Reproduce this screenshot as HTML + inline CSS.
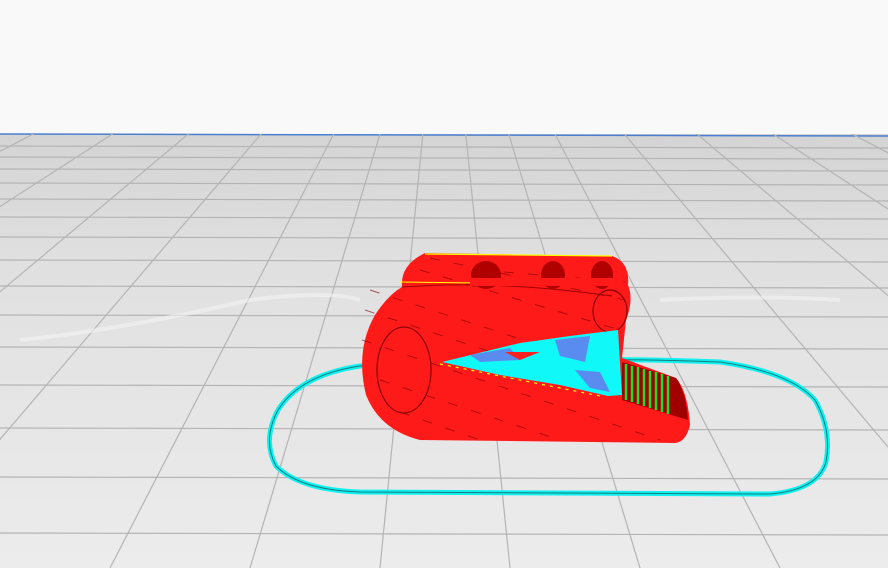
<!DOCTYPE html>
<html><head><meta charset="utf-8"><style>
html,body{margin:0;padding:0;background:#f9f9f9}
svg{display:block}
</style></head><body>
<svg width="888" height="568" viewBox="0 0 888 568" xmlns="http://www.w3.org/2000/svg">
<defs>
<linearGradient id="fl" x1="0" y1="0" x2="0" y2="1">
<stop offset="0" stop-color="#d4d4d4"/><stop offset="0.3" stop-color="#e0e0e0"/><stop offset="1" stop-color="#ececec"/>
</linearGradient>
<clipPath id="fc"><rect x="0" y="134" width="888" height="434"/></clipPath>
</defs>
<rect width="888" height="134" fill="#f9f9f9"/>
<rect x="0" y="134" width="888" height="434" fill="url(#fl)"/>
<line x1="0" y1="134" x2="888" y2="136" stroke="#4a7fd0" stroke-width="1.5"/>
<g clip-path="url(#fc)" stroke="#b4b4b4" stroke-width="1.2">
<line x1="0" y1="146" x2="888" y2="148"/>
<line x1="0" y1="157" x2="888" y2="159"/>
<line x1="0" y1="169" x2="888" y2="171"/>
<line x1="0" y1="183" x2="888" y2="185"/>
<line x1="0" y1="199" x2="888" y2="201"/>
<line x1="0" y1="217" x2="888" y2="219"/>
<line x1="0" y1="237" x2="888" y2="239"/>
<line x1="0" y1="260" x2="888" y2="262"/>
<line x1="0" y1="286" x2="888" y2="288"/>
<line x1="0" y1="315" x2="888" y2="317"/>
<line x1="0" y1="347" x2="888" y2="349"/>
<line x1="0" y1="385" x2="888" y2="387"/>
<line x1="0" y1="428" x2="888" y2="430"/>
<line x1="0" y1="477" x2="888" y2="479"/>
<line x1="0" y1="533" x2="888" y2="535"/>
<g>
<line x1="444" y1="-80" x2="-800" y2="568"/>
<line x1="444" y1="-80" x2="-560" y2="568"/>
<line x1="444" y1="-80" x2="-330" y2="568"/>
<line x1="444" y1="-80" x2="-110" y2="568"/>
<line x1="444" y1="-80" x2="110" y2="568"/>
<line x1="444" y1="-80" x2="250" y2="568"/>
<line x1="444" y1="-80" x2="380" y2="568"/>
<line x1="444" y1="-80" x2="510" y2="568"/>
<line x1="444" y1="-80" x2="640" y2="568"/>
<line x1="444" y1="-80" x2="780" y2="568"/>
<line x1="444" y1="-80" x2="990" y2="568"/>
<line x1="444" y1="-80" x2="1210" y2="568"/>
<line x1="444" y1="-80" x2="1440" y2="568"/>
<line x1="444" y1="-80" x2="1680" y2="568"/>
</g>
</g>
<g fill="none" stroke="#f4f4f4" stroke-width="4" opacity="0.6">
<path d="M20 340 Q120 330 250 300 Q330 290 360 300"/>
<path d="M660 300 Q760 295 840 300"/>
</g>
<!-- skirt -->
<path d="M360 366 Q520 355 720 362 Q790 372 815 400 Q832 430 826 462 Q818 490 770 494 L360 492 Q300 490 276 466 Q262 440 278 410 Q300 375 360 366 Z" fill="none" stroke="#10f0f0" stroke-width="5"/>
<path d="M360 366 Q520 355 720 362 Q790 372 815 400 Q832 430 826 462 Q818 490 770 494 L360 492 Q300 490 276 466 Q262 440 278 410 Q300 375 360 366 Z" fill="none" stroke="#1b7a7a" stroke-width="1"/>
<!-- object body -->
<path d="M425 253 L612 256 Q630 262 628 285 Q634 300 626 320 L622 358 L676 378 Q688 392 690 425 Q686 442 675 443 L420 440 Q380 430 366 395 Q355 350 375 315 Q388 295 402 287 Q400 265 425 253 Z" fill="#ff1a1a"/>
<g stroke="#7a0000" stroke-width="1" opacity="0.6" stroke-dasharray="10 14">
<line x1="365" y1="310" x2="620" y2="395"/>
<line x1="362" y1="340" x2="660" y2="440"/>
<line x1="370" y1="290" x2="600" y2="365"/>
<line x1="380" y1="380" x2="560" y2="440"/>
<line x1="420" y1="270" x2="620" y2="330"/>
<line x1="430" y1="258" x2="625" y2="300"/>
<line x1="400" y1="412" x2="480" y2="440"/>
<line x1="480" y1="270" x2="625" y2="282"/>
</g>
<path d="M402 287 Q500 280 612 296" fill="none" stroke="#a00000" stroke-width="1"/>
<line x1="425" y1="254" x2="612" y2="256" stroke="#ffff00" stroke-width="1.2"/>
<line x1="400" y1="282" x2="560" y2="284" stroke="#ffff00" stroke-width="1"/>
<ellipse cx="486" cy="275" rx="15" ry="14" fill="#b00000"/>
<ellipse cx="553" cy="275" rx="12" ry="14" fill="#b00000"/>
<ellipse cx="602" cy="275" rx="11" ry="14" fill="#b00000"/>
<rect x="470" y="278" width="150" height="8" fill="#ff1a1a"/>
<ellipse cx="610" cy="311" rx="17" ry="21" fill="none" stroke="#8a0000" stroke-width="1.2"/>
<ellipse cx="404" cy="370" rx="27" ry="43" fill="none" stroke="#8a0000" stroke-width="1.2"/>
<path d="M442 362 L520 343 L570 336 L618 330 L622 395 L608 396 L560 385 L500 375 Z" fill="#10f8f8"/>
<path d="M470 355 L510 348 L520 360 L480 362 Z" fill="#5a8cf0"/>
<path d="M555 340 L590 336 L585 362 L560 356 Z" fill="#5a8cf0"/>
<path d="M505 352 L540 352 L520 360 Z" fill="#ff2020"/>
<path d="M575 370 L600 372 L610 392 L590 388 Z" fill="#5a8cf0"/>
<path d="M440 364 L600 396" stroke="#ffff00" stroke-width="1.2" stroke-dasharray="3 5"/>
<path d="M622 362 L676 378 Q686 392 688 420 L622 400 Z" fill="#a00000"/>
<g stroke="#22dd22" stroke-width="2.5">
<line x1="626" y1="364" x2="626" y2="400"/>
<line x1="632" y1="366" x2="632" y2="402"/>
<line x1="638" y1="367" x2="638" y2="404"/>
<line x1="644" y1="369" x2="644" y2="406"/>
<line x1="650" y1="371" x2="650" y2="408"/>
<line x1="656" y1="372" x2="656" y2="410"/>
<line x1="662" y1="374" x2="662" y2="412"/>
<line x1="668" y1="376" x2="668" y2="414"/>
</g>
</svg>
</body></html>
